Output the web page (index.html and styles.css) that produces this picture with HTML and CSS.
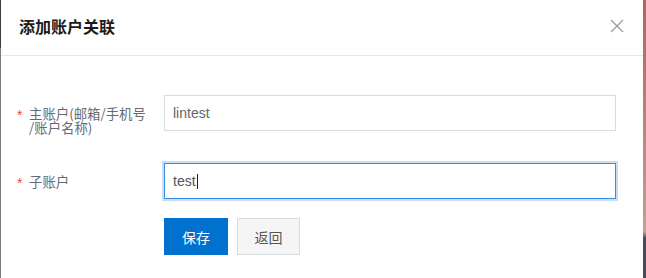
FILE: index.html
```html
<!DOCTYPE html>
<html lang="zh-CN">
<head>
<meta charset="utf-8">
<title>添加账户关联</title>
<link rel="stylesheet" href="styles.css">
</head>
<body>
<div class="screen">
  <div class="edge-left"></div>
  <div class="modal">
    <div class="modal-header">
      <h2 class="modal-title">添加账户关联</h2>
      <button class="close-btn" aria-label="关闭">
        <svg width="14" height="14" viewBox="0 0 14 14"><path d="M1 1L13 13M13 1L1 13" stroke="#9a9a9a" stroke-width="1.3" fill="none"/></svg>
      </button>
    </div>
    <div class="modal-body">
      <div class="form">
        <div class="label"><span class="req">*</span><span class="label-text">主账户(邮箱/手机号<br>/账户名称)</span></div>
        <div class="input">lintest</div>
        <div class="label"><span class="req">*</span><span class="label-text">子账户</span></div>
        <div class="input focused">test<span class="caret"></span></div>
        <div></div>
        <div class="actions">
          <button class="btn btn-primary">保存</button>
          <button class="btn btn-default">返回</button>
        </div>
      </div>
    </div>
  </div>
  <div class="edge-right"></div>
</div>
</body>
</html>
```
FILE: styles.css
```css
html, body {
  margin: 0;
  padding: 0;
  background: #fff;
}
.screen {
  display: flex;
  width: 646px;
  height: 278px;
  overflow: hidden;
  font-family: "Liberation Sans", "Noto Sans CJK SC", sans-serif;
}
.edge-left {
  width: 1px;
  flex: none;
  background: linear-gradient(to bottom, #3e3e3e 0, #3e3e3e 48px, #7d7d7d 48px, #7d7d7d 100%);
}
.edge-right {
  width: 3px;
  flex: none;
  background: linear-gradient(to bottom, #b06464 0, #b9837a 120px, #c4a18c 232px, #4b4a5a 238px, #4b4a5a 100%);
}
.modal {
  flex: 1;
  background: #fff;
  display: flex;
  flex-direction: column;
}
.modal-header {
  height: 55px;
  border-bottom: 1px solid #e6e6e6;
  display: flex;
  align-items: center;
  justify-content: space-between;
  padding: 0 20px 0 18px;
  box-sizing: content-box;
}
.modal-title {
  margin: 0;
  font-family: "Noto Sans CJK SC", sans-serif;
  font-size: 16px;
  font-weight: 700;
  color: #1a1a1a;
  line-height: 20px;
  padding-bottom: 4px;
}
.close-btn {
  border: 0;
  background: none;
  padding: 0;
  width: 14px;
  height: 14px;
  display: flex;
  margin-bottom: 4px;
  margin-right: -1px;
}
.modal-body {
  padding: 39px 0 0 16px;
}
.form {
  display: grid;
  grid-template-columns: 147px 452px;
  grid-template-rows: 36px 36px 37px;
  row-gap: 32px;
}
.form .actions {
  margin-top: -13px;
}
.label {
  display: flex;
  align-items: flex-start;
  padding-top: 11px;
  color: #666b73;
  font-size: 13.4px;
  line-height: 14px;
  font-family: "Noto Sans CJK SC", sans-serif;
}
.req {
  color: #e84a4a;
  width: 12px;
  flex: none;
  font-family: "Liberation Sans", sans-serif;
  font-size: 14px;
  line-height: 14px;
  position: relative;
  top: 2px;
}
.label-text {
  display: block;
}
.input {
  box-sizing: border-box;
  height: 36px;
  border: 1px solid #d6dce4;
  padding: 0 8px;
  display: flex;
  align-items: center;
  font-family: "Liberation Sans", sans-serif;
  font-size: 14px;
  color: #666;
}
.input.focused {
  border-color: #3a8ee0;
  box-shadow: 0 0 0 2px #c9def4;
  color: #555;
}
.caret {
  display: inline-block;
  width: 1px;
  height: 15px;
  background: #222;
  margin-left: 1px;
}
.actions {
  display: flex;
  gap: 9px;
}
.btn {
  height: 37px;
  font-family: "Noto Sans CJK SC", sans-serif;
  font-size: 14px;
  padding: 0;
  border-radius: 0;
}
.btn-primary {
  width: 64px;
  background: #0071ce;
  color: #fff;
  border: 0;
}
.btn-default {
  width: 63px;
  background: #f5f5f5;
  color: #555;
  border: 1px solid #d6dce4;
}
```
